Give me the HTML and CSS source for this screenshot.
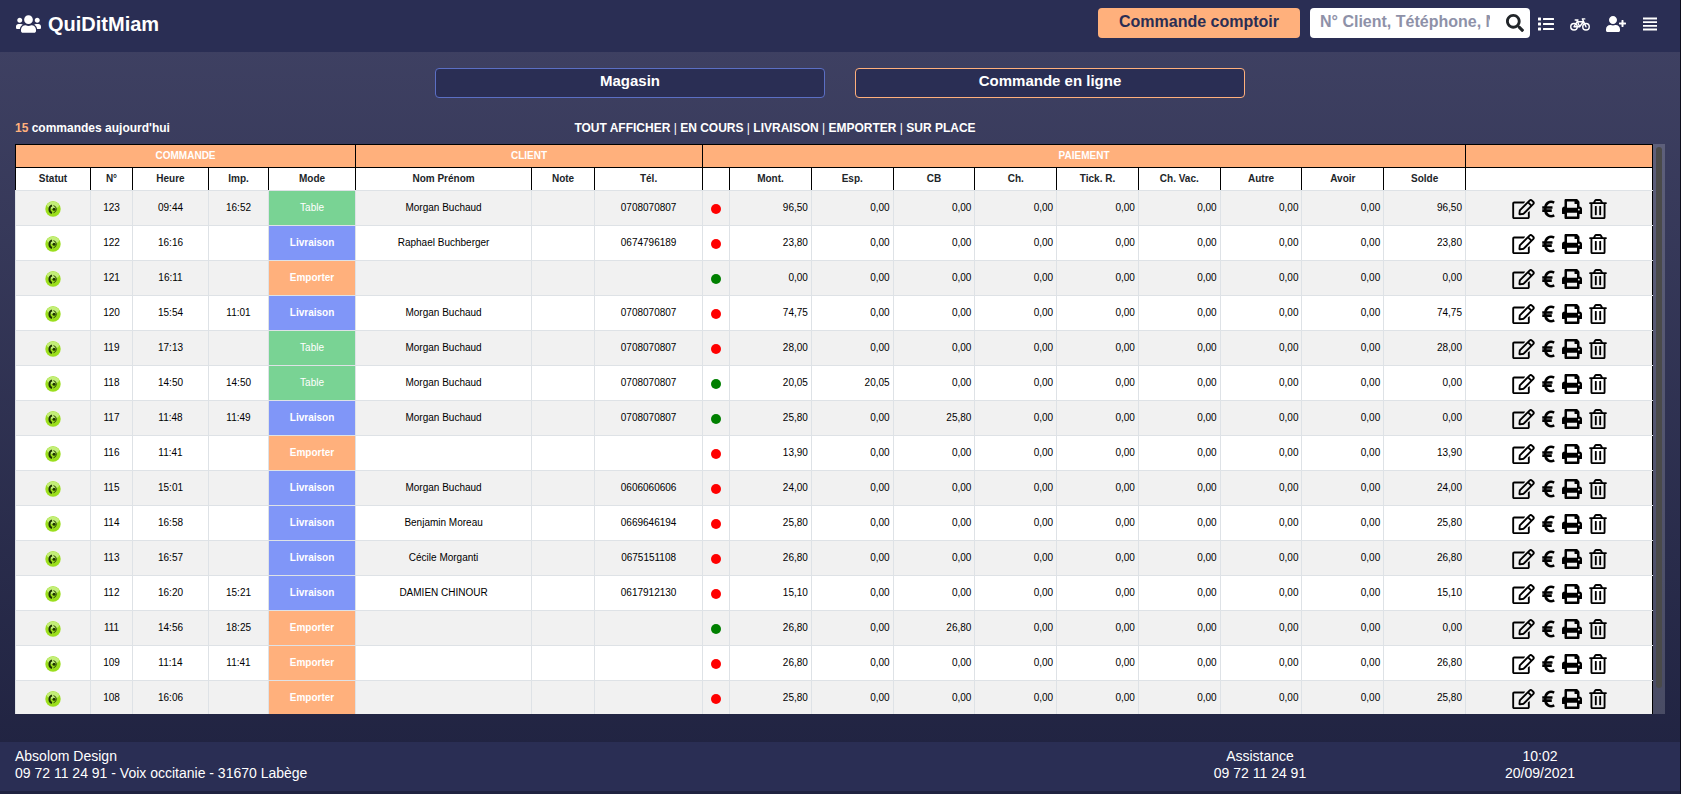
FILE: index.html
```
<!DOCTYPE html>
<html lang="fr">
<head>
<meta charset="utf-8">
<title>QuiDitMiam</title>
<link rel="stylesheet" href="styles.css">
</head>
<body>
<svg class="sprite" aria-hidden="true">
  <symbol id="i-users" viewBox="0 0 640 512"><path d="M96 224c35.300 0 64-28.700 64-64s-28.700-64-64-64-64 28.700-64 64 28.700 64 64 64zm448 0c35.300 0 64-28.700 64-64s-28.700-64-64-64-64 28.700-64 64 28.700 64 64 64zm32 32h-64c-17.600 0-33.500 7.100-45.100 18.600 40.300 22.100 68.900 62 75.100 109.400h66c17.700 0 32-14.300 32-32v-32c0-35.300-28.700-64-64-64zm-256 0c61.900 0 112-50.100 112-112S381.900 32 320 32 208 82.100 208 144s50.100 112 112 112zm76.800 32h-8.300c-20.800 10-43.900 16-68.500 16s-47.600-6-68.500-16h-8.300C179.600 288 128 339.600 128 403.200V432c0 26.500 21.500 48 48 48h288c26.500 0 48-21.500 48-48v-28.800c0-63.600-51.600-115.200-115.200-115.200zm-223.700-13.400C161.500 263.100 145.600 256 128 256H64c-35.300 0-64 28.700-64 64v32c0 17.700 14.300 32 32 32h65.900c6.300-47.400 34.900-87.300 75.200-109.400z"/></symbol>
  <symbol id="i-search" viewBox="0 0 512 512"><path d="M505 442.700L405.300 343c-4.500-4.500-10.600-7-17-7H372c27.600-35.300 44-79.700 44-128C416 93.100 322.900 0 208 0S0 93.100 0 208s93.100 208 208 208c48.300 0 92.700-16.400 128-44v16.300c0 6.400 2.500 12.500 7 17l99.700 99.700c9.400 9.400 24.600 9.400 33.900 0l28.300-28.300c9.400-9.400 9.400-24.600.1-34zM208 336c-70.700 0-128-57.200-128-128 0-70.700 57.200-128 128-128 70.700 0 128 57.200 128 128 0 70.700-57.200 128-128 128z"/></symbol>
  <symbol id="i-list" viewBox="0 0 512 512"><path d="M80 368H16a16 16 0 0 0-16 16v64a16 16 0 0 0 16 16h64a16 16 0 0 0 16-16v-64a16 16 0 0 0-16-16zm0-320H16A16 16 0 0 0 0 64v64a16 16 0 0 0 16 16h64a16 16 0 0 0 16-16V64a16 16 0 0 0-16-16zm0 160H16a16 16 0 0 0-16 16v64a16 16 0 0 0 16 16h64a16 16 0 0 0 16-16v-64a16 16 0 0 0-16-16zm416 176H176a16 16 0 0 0-16 16v32a16 16 0 0 0 16 16h320a16 16 0 0 0 16-16v-32a16 16 0 0 0-16-16zm0-320H176a16 16 0 0 0-16 16v32a16 16 0 0 0 16 16h320a16 16 0 0 0 16-16V80a16 16 0 0 0-16-16zm0 160H176a16 16 0 0 0-16 16v32a16 16 0 0 0 16 16h320a16 16 0 0 0 16-16v-32a16 16 0 0 0-16-16z"/></symbol>
  <symbol id="i-bike" viewBox="0 0 640 512"><g fill="none" stroke="currentColor" stroke-width="46" stroke-linejoin="round" stroke-linecap="round"><circle cx="128" cy="344" r="104"/><circle cx="512" cy="344" r="104"/><path d="M128 344l96-160h204l-120 160zM308 344L216 130M166 130h90M512 344L396 92h76"/></g></symbol>
  <symbol id="i-userplus" viewBox="0 0 640 512"><path d="M624 208h-64v-64c0-8.800-7.200-16-16-16h-32c-8.800 0-16 7.200-16 16v64h-64c-8.800 0-16 7.200-16 16v32c0 8.800 7.200 16 16 16h64v64c0 8.800 7.200 16 16 16h32c8.800 0 16-7.200 16-16v-64h64c8.800 0 16-7.200 16-16v-32c0-8.800-7.200-16-16-16zm-400 48c70.700 0 128-57.300 128-128S294.700 0 224 0 96 57.300 96 128s57.300 128 128 128zm89.600 32h-16.700c-22.200 10.200-46.900 16-72.900 16s-50.600-5.800-72.900-16h-16.700C60.200 288 0 348.200 0 422.400V464c0 26.500 21.500 48 48 48h352c26.500 0 48-21.500 48-48v-41.600c0-74.200-60.200-134.400-134.400-134.400z"/></symbol>
  <symbol id="i-bars" viewBox="0 0 512 512"><path d="M32 48h448v60H32zM32 166h448v60H32zM32 284h448v60H32zM32 402h448v60H32z"/></symbol>
  <symbol id="i-edit" viewBox="0 0 576 512"><path d="M402.300 344.900l32-32c5-5 13.700-1.500 13.700 5.700V464c0 26.500-21.500 48-48 48H48c-26.500 0-48-21.500-48-48V112c0-26.500 21.500-48 48-48h273.500c7.100 0 10.700 8.600 5.700 13.700l-32 32c-1.500 1.500-3.500 2.300-5.700 2.300H48v352h352V350.500c0-2.100.8-4.100 2.300-5.600zm156.600-201.800L296.300 405.700l-90.400 10c-26.200 2.900-48.500-19.200-45.600-45.600l10-90.400L432.900 17.100c22.900-22.900 59.900-22.900 82.700 0l43.200 43.200c22.900 22.900 22.900 60 .1 82.800zM460.100 174L402 115.900 216.200 301.800l-7.300 65.300 65.300-7.300L460.100 174zm64.800-79.700l-43.200-43.200c-4.100-4.100-10.800-4.100-14.800 0L436 82l58.100 58.100 30.900-30.900c4-4.200 4-10.800-.1-14.900z"/></symbol>
  <symbol id="i-euro" viewBox="0 0 320 512"><path fill="none" stroke="currentColor" stroke-width="68" d="M306 92C200 40 76 90 76 256s124 216 232 164M0 218h262M0 298h244"/></symbol>
  <symbol id="i-print" viewBox="0 0 512 512"><path d="M448 192V77.300c0-8.500-3.400-16.600-9.400-22.600L393.400 9.400c-6-6-14.100-9.400-22.600-9.400H96C78.300 0 64 14.300 64 32v160c-35.300 0-64 28.700-64 64v112c0 8.800 7.200 16 16 16h48v96c0 17.700 14.300 32 32 32h320c17.700 0 32-14.300 32-32v-96h48c8.800 0 16-7.200 16-16V256c0-35.300-28.700-64-64-64zm-64 256H128v-96h256v96zm0-224H128V64h192v48c0 8.800 7.200 16 16 16h48v96zm48 72c-13.300 0-24-10.700-24-24s10.700-24 24-24 24 10.700 24 24-10.700 24-24 24z"/></symbol>
  <symbol id="i-trash" viewBox="0 0 448 512"><path d="M268 416h24a12 12 0 0 0 12-12V188a12 12 0 0 0-12-12h-24a12 12 0 0 0-12 12v216a12 12 0 0 0 12 12zM432 80h-82.400l-34-56.700A48 48 0 0 0 274.400 0H173.600a48 48 0 0 0-41.200 23.300L98.400 80H16A16 16 0 0 0 0 96v16a16 16 0 0 0 16 16h16v336a48 48 0 0 0 48 48h288a48 48 0 0 0 48-48V128h16a16 16 0 0 0 16-16V96a16 16 0 0 0-16-16zM171.800 50.900A6 6 0 0 1 177 48h94a6 6 0 0 1 5.200 2.900L293.600 80H154.400zM368 464H80V128h288zm-212-48h24a12 12 0 0 0 12-12V188a12 12 0 0 0-12-12h-24a12 12 0 0 0-12 12v216a12 12 0 0 0 12 12z"/></symbol>
  <symbol id="i-phone" viewBox="0 0 16 16"><circle cx="8" cy="8" r="7.700" fill="#9ade1c"/><ellipse cx="8" cy="4.300" rx="6" ry="3.600" fill="#c3ee78"/><path d="M7 4.400C3.600 5.400 3.600 11 7 12" fill="none" stroke="#1c3004" stroke-width="2"/><path d="M8.500 4.600a3.700 3.700 0 0 1 0 7.200" fill="none" stroke="#2c4a08" stroke-width="1"/><circle cx="9" cy="8.200" r="1.500" fill="#1c3004"/></symbol>
</svg>

<header class="topbar">
  <a class="brand" href="#"><svg class="icon-brand"><use href="#i-users"/></svg>QuiDitMiam</a>
  <div class="tools">
    <button class="counter" type="button">Commande comptoir</button>
    <form class="search">
      <input class="search-input" type="text" aria-label="Recherche" placeholder="N° Client, Tétéphone, Nom">
      <button class="search-button" type="button" aria-label="Rechercher"><svg class="icon-search"><use href="#i-search"/></svg></button>
    </form>
    <nav class="nav">
      <a href="#" aria-label="Liste"><svg class="icon-nav"><use href="#i-list"/></svg></a>
      <a href="#" aria-label="Livreurs"><svg class="icon-wide"><use href="#i-bike"/></svg></a>
      <a href="#" aria-label="Ajouter un client"><svg class="icon-wide"><use href="#i-userplus"/></svg></a>
      <a href="#" aria-label="Menu"><svg class="icon-nav"><use href="#i-bars"/></svg></a>
    </nav>
  </div>
</header>

<main class="main">
  <div class="tabs">
    <button class="tab" type="button">Magasin</button>
    <button class="tab tab-online" type="button">Commande en ligne</button>
  </div>
  <div class="summary">
    <div><span class="count">15</span> commandes aujourd'hui</div>
    <nav class="filters"><a href="#">TOUT AFFICHER</a> | <a href="#">EN COURS</a> | <a href="#">LIVRAISON</a> | <a href="#">EMPORTER</a> | <a href="#">SUR PLACE</a></nav>
  </div>
  <div class="orders">
    <div class="viewport">
      <table class="table">
        <colgroup>
          <col class="c-statut"><col class="c-num"><col class="c-heure"><col class="c-imp"><col class="c-mode">
          <col class="c-nom"><col class="c-note"><col class="c-tel"><col class="c-dot">
          <col class="c-amount" span="9"><col class="c-actions">
        </colgroup>
        <thead>
          <tr class="groups"><th colspan="5">COMMANDE</th><th colspan="3">CLIENT</th><th colspan="10">PAIEMENT</th><th></th></tr>
          <tr class="heads"><th>Statut</th><th>N°</th><th>Heure</th><th>Imp.</th><th>Mode</th><th>Nom Prénom</th><th>Note</th><th>Tél.</th><th></th><th>Mont.</th><th>Esp.</th><th>CB</th><th>Ch.</th><th>Tick. R.</th><th>Ch. Vac.</th><th>Autre</th><th>Avoir</th><th>Solde</th><th></th></tr>
        </thead>
        <tbody id="rows"></tbody>
      </table>
    </div>
    <div class="scrollbar"><div class="thumb"></div></div>
  </div>
</main>

<footer class="footer">
  <div class="company">Absolom Design<br>09 72 11 24 91 - Voix occitanie - 31670 Labège</div>
  <div class="info">Assistance<br>09 72 11 24 91</div>
  <div class="info">10:02<br>20/09/2021</div>
</footer>
<script src="orders.js"></script>
</body>
</html>
```
FILE: styles.css
```
* { box-sizing: border-box; }
body {
  margin: 0;
  height: 100vh;
  display: flex;
  flex-direction: column;
  border-right: 1px solid #0c0d1c;
  background: linear-gradient(#404264, #1f2240);
  color: #fff;
  font-family: "Liberation Sans", Arial, sans-serif;
  font-size: 14px;
}
a { color: inherit; text-decoration: none; }
button, input { font: inherit; }
svg { display: block; fill: currentColor; }
.sprite { position: absolute; width: 0; height: 0; }

.topbar {
  height: 52px;
  padding: 8px 22px 14px 16px;
  display: flex;
  justify-content: space-between;
  align-items: center;
  background: #2a2e54;
}
.brand { padding-top: 2px; display: flex; align-items: center; gap: 7px; font-size: 20px; font-weight: bold; }
.icon-brand { width: 25px; height: 20px; }
.tools { display: flex; align-items: center; }
.counter {
  width: 202px;
  height: 30px;
  padding: 0 0 2px;
  border: 0;
  border-radius: 4px;
  background: #ffb07c;
  color: #2a2e54;
  font-size: 16px;
  font-weight: bold;
}
.search {
  width: 220px;
  height: 30px;
  margin: 0 8px 0 10px;
  display: flex;
  align-items: center;
  border-radius: 4px;
  background: #fff;
}
.search-input {
  flex: 1;
  min-width: 0;
  margin-left: 10px;
  padding: 0 0 2px;
  border: 0;
  outline: 0;
  background: none;
  font-size: 16px;
  font-weight: bold;
}
.search-input::placeholder { color: #8e91a8; opacity: 1; }
.search-button { padding: 0 6px 0 16px; border: 0; background: none; color: #212529; }
.icon-search { width: 18px; height: 18px; }
.nav { padding-top: 2px; display: flex; align-items: center; gap: 16px; }
.icon-nav { width: 16px; height: 16px; }
.icon-wide { width: 20px; height: 16px; }

.main { flex: 1; min-height: 0; padding: 16px 15px 28px; display: flex; flex-direction: column; }
.tabs { display: flex; justify-content: center; gap: 30px; }
.tab {
  width: 390px;
  height: 30px;
  padding: 0 0 6px;
  border: 1px solid #5b6fc4;
  border-radius: 4px;
  background: #2a2e54;
  color: #fff;
  font-size: 15px;
  font-weight: bold;
}
.tab-online { border-color: #ffb07c; }
.summary {
  margin: 23px 0 8px;
  display: grid;
  grid-template-columns: 1fr auto 1fr;
  line-height: 15px;
  font-size: 12px;
  font-weight: bold;
}
.count { color: #ffb07c; }
.filters { font-weight: normal; margin-right: 130px; }
.filters a { font-weight: bold; }

.orders { flex: 1; min-height: 0; display: flex; }
.viewport { flex: 1; overflow: hidden; }
.table { width: 100%; table-layout: fixed; border-collapse: collapse; background: #fff; color: #212529; font-size: 10px; }
.c-statut { width: 75px; }
.c-num { width: 42px; }
.c-heure { width: 76px; }
.c-imp { width: 60px; }
.c-mode { width: 87px; }
.c-nom { width: 176px; }
.c-note { width: 63px; }
.c-tel { width: 108px; }
.c-dot { width: 27px; }
.c-amount { width: 5%; }
.c-actions { width: 187px; }
.table th { height: 23px; padding: 0 0 2px; border: 1px solid #000; }
.table .heads th { border-bottom-color: #dee2e6; }
.groups { background: #ffb07c; color: #fff; }
.table td { height: 35px; padding: 0 3px 2px; border: 1px solid #dee2e6; text-align: center; color: #000; }
.table .graphic { padding: 1px 3px 0; }
.table td:last-child { border-right-color: #000; }
.table tbody tr:nth-child(odd) { background: #f1f1f1; }
.table .amount { text-align: right; }
.table .mode { color: #fff; font-weight: bold; }
.table .mode-table { background: #79d394; font-weight: normal; }
.mode-livraison { background: #8096f8; }
.mode-emporter { background: #ffb07c; }
.icon-phone { width: 16px; height: 16px; margin: 0 auto; }
.dot { width: 10px; height: 10px; margin: 0 auto; border-radius: 50%; background: #f00; }
.dot-paid { background: #008000; }
.actions { display: flex; justify-content: center; align-items: center; gap: 7px; }
.action { padding: 0; border: 0; background: none; color: #000; }
.icon-edit { width: 23px; height: 20px; }
.icon-euro { width: 13px; height: 20px; }
.icon-print { width: 20px; height: 20px; }
.icon-trash { width: 18px; height: 20px; }
.scrollbar { width: 12px; padding: 3px; background: rgba(255, 255, 255, 0.18); }
.thumb { width: 6px; height: 96%; border-radius: 3px; background: #4a4a4a; }

.footer {
  margin-bottom: 3px;
  padding: 6px 0 9px;
  display: grid;
  grid-template-columns: 8fr 2fr 2fr;
  background: #2a2e54;
  line-height: 17px;
}
.company { padding-left: 15px; }
.info { text-align: center; }
```
FILE: orders.js
```
const orders = [
  [123, "09:44", "16:52", "Table", "Morgan Buchaud", "0708070807", "96,50", "0,00", "0,00", "96,50"],
  [122, "16:16", "", "Livraison", "Raphael Buchberger", "0674796189", "23,80", "0,00", "0,00", "23,80"],
  [121, "16:11", "", "Emporter", "", "", "0,00", "0,00", "0,00", "0,00"],
  [120, "15:54", "11:01", "Livraison", "Morgan Buchaud", "0708070807", "74,75", "0,00", "0,00", "74,75"],
  [119, "17:13", "", "Table", "Morgan Buchaud", "0708070807", "28,00", "0,00", "0,00", "28,00"],
  [118, "14:50", "14:50", "Table", "Morgan Buchaud", "0708070807", "20,05", "20,05", "0,00", "0,00"],
  [117, "11:48", "11:49", "Livraison", "Morgan Buchaud", "0708070807", "25,80", "0,00", "25,80", "0,00"],
  [116, "11:41", "", "Emporter", "", "", "13,90", "0,00", "0,00", "13,90"],
  [115, "15:01", "", "Livraison", "Morgan Buchaud", "0606060606", "24,00", "0,00", "0,00", "24,00"],
  [114, "16:58", "", "Livraison", "Benjamin Moreau", "0669646194", "25,80", "0,00", "0,00", "25,80"],
  [113, "16:57", "", "Livraison", "Cécile Morganti", "0675151108", "26,80", "0,00", "0,00", "26,80"],
  [112, "16:20", "15:21", "Livraison", "DAMIEN CHINOUR", "0617912130", "15,10", "0,00", "0,00", "15,10"],
  [111, "14:56", "18:25", "Emporter", "", "", "26,80", "0,00", "26,80", "0,00"],
  [109, "11:14", "11:41", "Emporter", "", "", "26,80", "0,00", "0,00", "26,80"],
  [108, "16:06", "", "Emporter", "", "", "25,80", "0,00", "0,00", "25,80"]
];

const action = (name, label) =>
  `<button class="action" type="button" aria-label="${label}"><svg class="icon-${name}"><use href="#i-${name}"/></svg></button>`;

const actions = action("edit", "Modifier") + action("euro", "Encaisser") + action("print", "Imprimer") + action("trash", "Supprimer");

document.getElementById("rows").innerHTML = orders.map(([num, time, printed, mode, name, phone, total, cash, card, balance]) => {
  const amounts = [total, cash, card, "0,00", "0,00", "0,00", "0,00", "0,00", balance];
  return `<tr>
    <td class="graphic"><svg class="icon-phone"><use href="#i-phone"/></svg></td>
    <td>${num}</td><td>${time}</td><td>${printed}</td>
    <td class="mode mode-${mode.toLowerCase()}">${mode}</td>
    <td>${name}</td><td></td><td>${phone}</td>
    <td class="graphic"><div class="dot${balance === "0,00" ? " dot-paid" : ""}"></div></td>
    ${amounts.map(a => `<td class="amount">${a}</td>`).join("")}
    <td class="graphic"><div class="actions">${actions}</div></td>
  </tr>`;
}).join("");
```
